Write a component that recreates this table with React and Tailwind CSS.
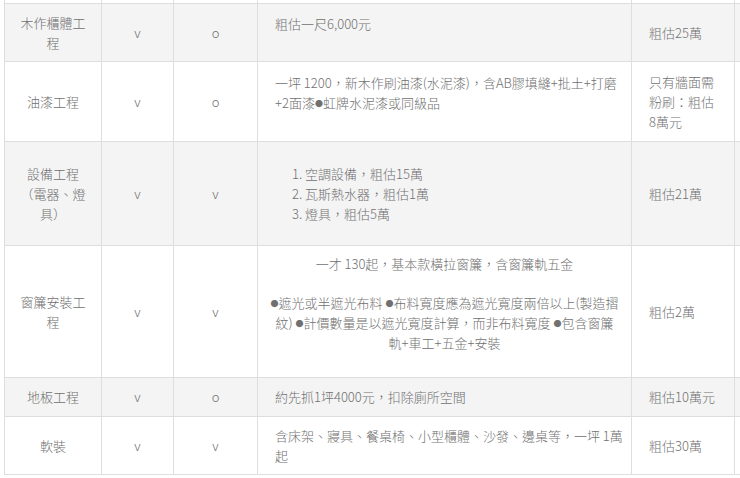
import React from "react";

const COLS = "grid grid-cols-[97px_72px_84px_374px_104px]";
const cellBase = "border-l border-[#dedede] flex items-center";

function Dot() {
  return <span className="text-[8px] leading-none align-[1px]">●</span>;
}

function Row({ h, bg, first, last, cells }) {
  return (
    <div
      className={`${COLS} ${bg} ${first ? "" : "border-t border-[#dedede]"} ${
        last ? "border-b" : ""
      } ${h}`}
    >
      {cells}
    </div>
  );
}

function C1({ children }) {
  return (
    <div className={`${cellBase} justify-center text-center whitespace-nowrap`}>
      <div>{children}</div>
    </div>
  );
}
function CM({ children }) {
  return <div className={`${cellBase} justify-center`}>{children}</div>;
}
function C4({ children, pb = "", center = false }) {
  return (
    <div
      className={`${cellBase} px-[17px] whitespace-nowrap ${
        center ? "justify-center text-center" : ""
      }`}
    >
      <div className={pb}>{children}</div>
    </div>
  );
}
function C5({ children }) {
  return (
    <div className={`${cellBase} border-r border-r-[#dedede] px-[17px] whitespace-nowrap`}>
      <div>{children}</div>
    </div>
  );
}

export default function App() {
  return (
    <div className="w-[740px] h-[478px] bg-white overflow-hidden font-['Noto_Sans_CJK_TC','Noto_Sans',sans-serif] font-light text-[13px] leading-[20px] text-[#707070]">
      <div className="pl-[4px]">
        <Row
          h="h-[3px]"
          bg="bg-white"
          first
          cells={
            <>
              <div className={cellBase}></div>
              <div className={cellBase}></div>
              <div className={cellBase}></div>
              <div className={cellBase}></div>
              <div className={`${cellBase} border-r border-r-[#dedede]`}></div>
            </>
          }
        />
        <Row
          h="h-[58px]"
          bg="bg-[#f4f4f4]"
          cells={
            <>
              <C1>
                木作櫃體工
                <br />程
              </C1>
              <CM>v</CM>
              <CM>o</CM>
              <C4 pb="pb-[18px]">粗估一尺6,000元</C4>
              <C5>粗估25萬</C5>
            </>
          }
        />
        <Row
          h="h-[80px]"
          bg="bg-white"
          cells={
            <>
              <C1>油漆工程</C1>
              <CM>v</CM>
              <CM>o</CM>
              <C4 pb="pb-[18px]">
                一坪 1200，新木作刷油漆(水泥漆)，含AB膠填縫+批土+打磨
                <br />
                +2面漆<Dot />虹牌水泥漆或同級品
              </C4>
              <C5>
                只有牆面需
                <br />
                粉刷：粗估
                <br />
                8萬元
              </C5>
            </>
          }
        />
        <Row
          h="h-[104px]"
          bg="bg-[#f4f4f4]"
          cells={
            <>
              <C1>
                設備工程
                <br />
                （電器、燈
                <br />
                具）
              </C1>
              <CM>v</CM>
              <CM>v</CM>
              <C4>
                <ol className="list-decimal pl-[30px]">
                  <li>空調設備，粗估15萬</li>
                  <li>瓦斯熱水器，粗估1萬</li>
                  <li>燈具，粗估5萬</li>
                </ol>
              </C4>
              <C5>粗估21萬</C5>
            </>
          }
        />
        <Row
          h="h-[132px]"
          bg="bg-white"
          cells={
            <>
              <C1>
                窗簾安裝工
                <br />程
              </C1>
              <CM>v</CM>
              <CM>v</CM>
              <C4 center pb="pb-[17px]">
                <p>一才 130起，基本款橫拉窗簾，含窗簾軌五金</p>
                <p className="mt-[19px]">
                  <Dot />遮光或半遮光布料 <Dot />布料寬度應為遮光寬度兩倍以上(製造摺
                  <br />
                  紋) <Dot />計價數量是以遮光寬度計算，而非布料寬度 <Dot />包含窗簾
                  <br />
                  軌+車工+五金+安裝
                </p>
              </C4>
              <C5>粗估2萬</C5>
            </>
          }
        />
        <Row
          h="h-[39px]"
          bg="bg-[#f4f4f4]"
          cells={
            <>
              <C1>地板工程</C1>
              <CM>v</CM>
              <CM>o</CM>
              <C4>約先抓1坪4000元，扣除廁所空間</C4>
              <C5>粗估10萬元</C5>
            </>
          }
        />
        <Row
          h="h-[59px]"
          bg="bg-white"
          last
          cells={
            <>
              <C1>軟裝</C1>
              <CM>v</CM>
              <CM>v</CM>
              <C4>
                含床架、寢具、餐桌椅、小型櫃體、沙發、邊桌等，一坪 1萬
                <br />起
              </C4>
              <C5>粗估30萬</C5>
            </>
          }
        />
      </div>
    </div>
  );
}
